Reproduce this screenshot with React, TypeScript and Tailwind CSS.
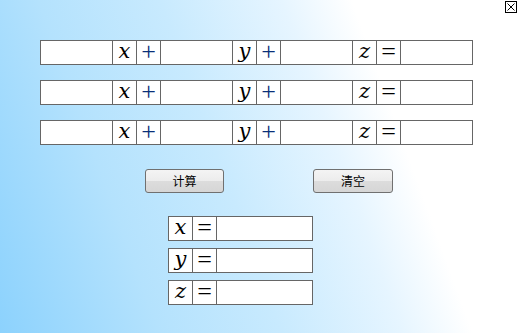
import React from "react";

const serif = { fontFamily: '"DejaVu Serif", serif' };
const opFont = { fontFamily: '"Liberation Serif", serif' };

function Cell({ w, children, kind }: { w: string; children?: React.ReactNode; kind?: "var" | "op" | "eq" }) {
  const base = `h-full border-l border-[#666666] bg-white flex items-center justify-center ${w}`;
  if (kind === "var")
    return (
      <div className={base}>
        <span className="italic text-[21px] leading-none text-black -mt-[3px]" style={serif}>{children}</span>
      </div>
    );
  if (kind === "op")
    return (
      <div className={base}>
        <span className="text-[26px] leading-none text-[#0a2f78] -mt-[2px]" style={opFont}>{children}</span>
      </div>
    );
  if (kind === "eq")
    return (
      <div className={base}>
        <span className="text-[26px] leading-none text-black -mt-[2px]" style={opFont}>{children}</span>
      </div>
    );
  return <div className={base} />;
}

function EqRow() {
  return (
    <div className="flex h-[25px] w-[433px] border-y border-r border-[#666666]">
      <Cell w="w-[72px]" />
      <Cell w="w-[24px]" kind="var">x</Cell>
      <Cell w="w-[24px]" kind="op">+</Cell>
      <Cell w="w-[72px]" />
      <Cell w="w-[24px]" kind="var">y</Cell>
      <Cell w="w-[24px]" kind="op">+</Cell>
      <Cell w="w-[72px]" />
      <Cell w="w-[24px]" kind="var">z</Cell>
      <Cell w="w-[24px]" kind="eq">=</Cell>
      <Cell w="w-[72px]" />
    </div>
  );
}

function ResRow({ v }: { v: string }) {
  return (
    <div className="flex h-[25px] w-[145px] border-y border-r border-[#666666]">
      <Cell w="w-[24px]" kind="var">{v}</Cell>
      <Cell w="w-[24px]" kind="eq">=</Cell>
      <Cell w="w-[96px]" />
    </div>
  );
}

function Btn({ label, w }: { label: string; w: string }) {
  return (
    <button
      className={`h-[24px] ${w} rounded-[3px] border border-[#707070] bg-[linear-gradient(#f4f4f4_0%,#ececec_50%,#dcdcdc_51%,#d6d6d6_100%)] text-[12px] text-black flex items-center justify-center`}
      style={{ fontFamily: '"Noto Sans CJK SC", sans-serif' }}
    >
      {label}
    </button>
  );
}

export default function App() {
  return (
    <div className="relative w-[518px] h-[333px] overflow-hidden bg-[linear-gradient(70deg,#8cd2fd_0%,#b4e2fd_25%,#c8eafe_44%,#e6f5ff_63%,#ffffff_74%)]">
      <div className="absolute left-[505px] top-[1px]">
        <svg width="12" height="12" viewBox="0 0 12 12">
          <rect x="0.5" y="0.5" width="11" height="11" fill="white" stroke="black" strokeWidth="1" />
          <path d="M2.5 2.5 L9.5 9.5 M9.5 2.5 L2.5 9.5" stroke="black" strokeWidth="1" />
        </svg>
      </div>
      <div className="flex flex-col pt-[40px] pl-[40px]">
        <div className="flex flex-col gap-[15px]">
          <EqRow />
          <EqRow />
          <EqRow />
        </div>
        <div className="flex mt-[24px] pl-[105px] gap-[89px]">
          <Btn label="计算" w="w-[79px]" />
          <Btn label="清空" w="w-[80px]" />
        </div>
        <div className="flex flex-col gap-[7px] mt-[23px] pl-[128px]">
          <ResRow v="x" />
          <ResRow v="y" />
          <ResRow v="z" />
        </div>
      </div>
    </div>
  );
}
